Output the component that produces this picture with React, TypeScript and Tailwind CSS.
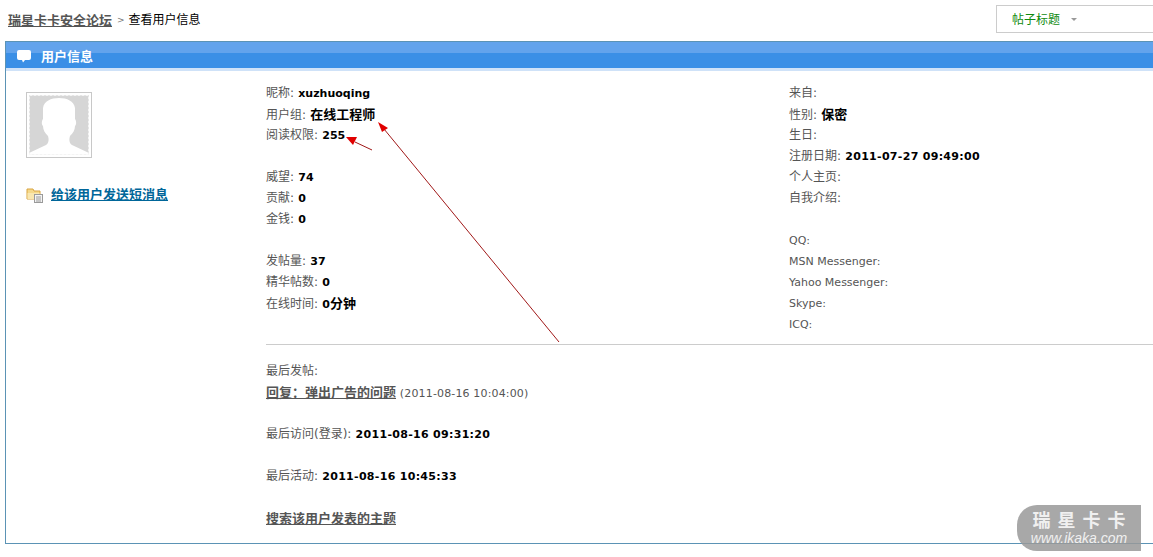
import type { ReactNode } from "react";

const latin = "font-['DejaVu_Sans','Noto_Sans_CJK_SC',sans-serif]";

function Row({ label, children, latinLabel }: { label?: string; children?: ReactNode; latinLabel?: boolean }) {
  return (
    <div className="h-[21px] leading-[21px] whitespace-nowrap">
      {label && <span className={latinLabel ? "text-[#555555] text-[11px]" : "text-[#555555]"}>{label}</span>}
      {children && <span className="font-bold text-black"> {children}</span>}
    </div>
  );
}

function En({ children }: { children: ReactNode }) {
  return <span className="text-[11px]">{children}</span>;
}

function Cn({ children }: { children: ReactNode }) {
  return <span className="text-[13px]">{children}</span>;
}

function DateText({ children }: { children: ReactNode }) {
  return <span className="text-[11px] tracking-[0.3px]">{children}</span>;
}

function Avatar() {
  return (
    <div className="w-[66px] h-[66px] border border-[#c8c8c8] p-[2px]">
      <svg width="60" height="60" viewBox="0 0 60 60" className="block">
        <rect width="60" height="60" fill="#d6d6d6" />
        <path d="M0 58 L17 50 C20 48 20 44 19 41 C16 38 14 35 14 31 C12 29 13 25 14 24 L14 13 C15 6 22 3 30 3 C38 3 45 6 46 13 L46 24 C47 25 48 29 46 31 C46 35 44 38 41 41 C40 44 40 48 43 50 L60 58 L60 60 L0 60 Z" fill="#ffffff" />
        <rect x="0.5" y="0.5" width="59" height="59" fill="none" stroke="#f4f4f4" strokeDasharray="3 1" />
      </svg>
    </div>
  );
}

function FolderIcon() {
  return (
    <svg width="17" height="16" viewBox="0 0 17 16" className="block">
      <path d="M1 2 H7 L8 4 H14 V12 H1 Z" fill="#f5d98b" stroke="#d9a441" />
      <rect x="1.5" y="6" width="12" height="6" fill="#f9e7b0" />
      <rect x="8.5" y="7.5" width="8" height="8" fill="#f4f4f4" stroke="#9a9a9a" />
      <path d="M10 10 H15 M10 12 H15 M10 14 H15" stroke="#9a9a9a" />
    </svg>
  );
}

export default function App() {
  return (
    <div className={`${latin} relative w-[1153px] h-[557px] overflow-hidden bg-white text-[12px] text-black`}>
      <div className="flex items-start h-[41px]">
        <div className="ml-2 mt-[9px] flex items-center h-[21px] leading-[21px] pt-px">
          <a className="font-bold text-[13px] text-[#555555] underline">瑞星卡卡安全论坛</a>
          <span className="ml-[5px] mr-[4px] text-[#777777] text-[9px]">&gt;</span>
          <span>查看用户信息</span>
        </div>
        <div className="ml-auto mt-[5px] mr-[-10px] w-[167px] h-[28px] border border-[#cccccc] flex items-center pt-px">
          <span className="ml-[15px] text-[#0f8a0f]">帖子标题</span>
          <span className="ml-[11px] w-0 h-0 border-x-[3px] border-x-transparent border-t-[3px] border-t-[#999999]"></span>
        </div>
      </div>

      <div className="ml-[5px] w-[1170px] h-[503px] border border-[#5b93b5]">
        <div className="h-[29px] bg-[#3a8fe6] border-b-[3px] border-[#cfe2f8] relative flex items-center pt-[3px]">
          <div className="absolute inset-x-0 top-0 h-[11px] bg-[#62a3ec]"></div>
          <svg width="14" height="13" viewBox="0 0 14 13" className="relative ml-[11px]">
            <path d="M2 0 H12 Q14 0 14 2 V8 Q14 10 12 10 H8 L6 12.5 L5 10 H2 Q0 10 0 8 V2 Q0 0 2 0 Z" fill="#ffffff" />
          </svg>
          <span className="relative ml-[10px] font-bold text-[13px] text-white">用户信息</span>
        </div>

        <div className="flex">
          <div className="w-[260px] shrink-0 pl-[20px] pt-[21px]">
            <Avatar />
            <div className="mt-[27px] flex items-center gap-2">
              <FolderIcon />
              <a className="font-bold text-[13px] text-[#006699] underline">给该用户发送短消息</a>
            </div>
          </div>

          <div className="flex-1">
            <div className="flex pt-[12px] pb-[9px] border-b border-[#cccccc]">
              <div className="w-[523px]">
                <Row label="昵称:"><En>xuzhuoqing</En></Row>
                <Row label="用户组:"><Cn>在线工程师</Cn></Row>
                <Row label="阅读权限:"><En>255</En></Row>
                <Row />
                <Row label="威望:"><En>74</En></Row>
                <Row label="贡献:"><En>0</En></Row>
                <Row label="金钱:"><En>0</En></Row>
                <Row />
                <Row label="发帖量:"><En>37</En></Row>
                <Row label="精华帖数:"><En>0</En></Row>
                <Row label="在线时间:"><En>0</En><Cn>分钟</Cn></Row>
              </div>
              <div>
                <Row label="来自:" />
                <Row label="性别:"><Cn>保密</Cn></Row>
                <Row label="生日:" />
                <Row label="注册日期:"><DateText>2011-07-27 09:49:00</DateText></Row>
                <Row label="个人主页:" />
                <Row label="自我介绍:" />
                <Row />
                <Row label="QQ:" latinLabel />
                <Row label="MSN Messenger:" latinLabel />
                <Row label="Yahoo Messenger:" latinLabel />
                <Row label="Skype:" latinLabel />
                <Row label="ICQ:" latinLabel />
              </div>
            </div>
            <div className="pt-[16px]">
              <Row label="最后发帖:" />
              <div className="h-[21px] leading-[21px] whitespace-nowrap text-[#555555]">
                <a className="font-bold text-[13px] underline">回复：弹出广告的问题</a>{" "}
                <span className="text-[11px] tracking-[0.15px]">(2011-08-16 10:04:00)</span>
              </div>
              <Row />
              <Row label="最后访问(登录):"><DateText>2011-08-16 09:31:20</DateText></Row>
              <Row />
              <Row label="最后活动:"><DateText>2011-08-16 10:45:33</DateText></Row>
              <Row />
              <div className="h-[21px] leading-[21px]">
                <a className="font-bold text-[13px] text-[#555555] underline">搜索该用户发表的主题</a>
              </div>
            </div>
          </div>
        </div>
      </div>

      {/* red annotation arrows drawn over the page */}
      <svg width="1153" height="557" className="absolute left-0 top-0 pointer-events-none">
        <path d="M372 150 L355 142 M559 342 L384 129" stroke="#a01818" strokeWidth="1" fill="none" />
        <path d="M346 137 L357 137 L353 145 Z M378 122 L388 128 L382 132 Z" fill="#e00000" />
      </svg>

      <div className="absolute left-[1017px] top-[505px] w-[124px] h-[46px] rounded-l-[20px] bg-[#999999]/85 flex flex-col items-center justify-center text-[#f0f0f0]">
        <span className="font-bold text-[18px] leading-[20px] tracking-[7px] ml-[7px]">瑞星卡卡</span>
        <span className="italic text-[14px] leading-[15px] font-['Liberation_Sans',sans-serif]">www.ikaka.com</span>
      </div>
    </div>
  );
}
